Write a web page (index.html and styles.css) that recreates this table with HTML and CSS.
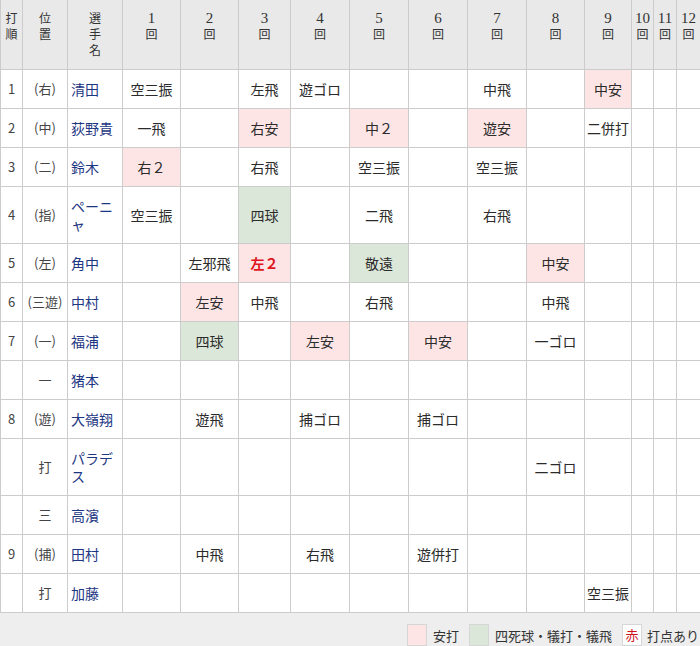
FILE: index.html
```html
<!DOCTYPE html>
<html lang="ja">
<head>
<meta charset="utf-8">
<title>打撃成績</title>
<link rel="stylesheet" href="styles.css">
</head>
<body>
<table class="score">
<colgroup>
<col class="c-order"><col class="c-pos"><col class="c-name">
<col class="c-i58"><col class="c-i58"><col class="c-i52"><col class="c-i59"><col class="c-i59"><col class="c-i59"><col class="c-i59"><col class="c-i58"><col class="c-i47"><col class="c-i22"><col class="c-i23"><col class="c-i24">
</colgroup>
<thead>
<tr>
<th><span class="ln">打</span><span class="ln">順</span></th>
<th><span class="ln">位</span><span class="ln">置</span></th>
<th><span class="ln">選</span><span class="ln">手</span><span class="ln">名</span></th>
<th><span class="ln num">1</span><span class="ln">回</span></th>
<th><span class="ln num">2</span><span class="ln">回</span></th>
<th><span class="ln num">3</span><span class="ln">回</span></th>
<th><span class="ln num">4</span><span class="ln">回</span></th>
<th><span class="ln num">5</span><span class="ln">回</span></th>
<th><span class="ln num">6</span><span class="ln">回</span></th>
<th><span class="ln num">7</span><span class="ln">回</span></th>
<th><span class="ln num">8</span><span class="ln">回</span></th>
<th><span class="ln num">9</span><span class="ln">回</span></th>
<th><span class="ln num">10</span><span class="ln">回</span></th>
<th><span class="ln num">11</span><span class="ln">回</span></th>
<th><span class="ln num">12</span><span class="ln">回</span></th>
</tr>
</thead>
<tbody>
<tr><td>1</td><td>(右)</td><td class="name">清田</td><td>空三振</td><td></td><td>左飛</td><td>遊ゴロ</td><td></td><td></td><td>中飛</td><td></td><td class="hit">中安</td><td></td><td></td><td></td></tr>
<tr><td>2</td><td>(中)</td><td class="name">荻野貴</td><td>一飛</td><td></td><td class="hit">右安</td><td></td><td class="hit">中２</td><td></td><td class="hit">遊安</td><td></td><td>二併打</td><td></td><td></td><td></td></tr>
<tr><td>3</td><td>(二)</td><td class="name">鈴木</td><td class="hit">右２</td><td></td><td>右飛</td><td></td><td>空三振</td><td></td><td>空三振</td><td></td><td></td><td></td><td></td><td></td></tr>
<tr><td>4</td><td>(指)</td><td class="name">ペーニャ</td><td>空三振</td><td></td><td class="walk">四球</td><td></td><td>二飛</td><td></td><td>右飛</td><td></td><td></td><td></td><td></td><td></td></tr>
<tr><td>5</td><td>(左)</td><td class="name">角中</td><td></td><td>左邪飛</td><td class="hit"><span class="rbi">左２</span></td><td></td><td class="walk">敬遠</td><td></td><td></td><td class="hit">中安</td><td></td><td></td><td></td><td></td></tr>
<tr><td>6</td><td>(三遊)</td><td class="name">中村</td><td></td><td class="hit">左安</td><td>中飛</td><td></td><td>右飛</td><td></td><td></td><td>中飛</td><td></td><td></td><td></td><td></td></tr>
<tr><td>7</td><td>(一)</td><td class="name">福浦</td><td></td><td class="walk">四球</td><td></td><td class="hit">左安</td><td></td><td class="hit">中安</td><td></td><td>一ゴロ</td><td></td><td></td><td></td><td></td></tr>
<tr><td></td><td>一</td><td class="name">猪本</td><td></td><td></td><td></td><td></td><td></td><td></td><td></td><td></td><td></td><td></td><td></td><td></td></tr>
<tr><td>8</td><td>(遊)</td><td class="name">大嶺翔</td><td></td><td>遊飛</td><td></td><td>捕ゴロ</td><td></td><td>捕ゴロ</td><td></td><td></td><td></td><td></td><td></td><td></td></tr>
<tr><td></td><td>打</td><td class="name">パラデス</td><td></td><td></td><td></td><td></td><td></td><td></td><td></td><td>二ゴロ</td><td></td><td></td><td></td><td></td></tr>
<tr><td></td><td>三</td><td class="name">高濱</td><td></td><td></td><td></td><td></td><td></td><td></td><td></td><td></td><td></td><td></td><td></td><td></td></tr>
<tr><td>9</td><td>(捕)</td><td class="name">田村</td><td></td><td>中飛</td><td></td><td>右飛</td><td></td><td>遊併打</td><td></td><td></td><td></td><td></td><td></td><td></td></tr>
<tr><td></td><td>打</td><td class="name">加藤</td><td></td><td></td><td></td><td></td><td></td><td></td><td></td><td></td><td>空三振</td><td></td><td></td><td></td></tr>
</tbody>
</table>
<div class="legend">
  <span class="sw sw-hit"></span><span class="lbl">安打</span>
  <span class="sw sw-walk"></span><span class="lbl">四死球・犠打・犠飛</span>
  <span class="sw sw-rbi">赤</span><span class="lbl">打点あり</span>
</div>
</body>
</html>
```

FILE: styles.css
```css
html, body {
  margin: 0;
  padding: 0;
  background: #eeeeee;
}
body {
  font-family: "Noto Sans CJK JP", "Noto Sans", sans-serif;
  color: #2b2b2b;
  font-size: 14px;
}
.score {
  border-collapse: collapse;
  table-layout: fixed;
  width: 700px;
  background: #ffffff;
}
.c-order { width: 22px; }
.c-pos { width: 45px; }
.c-name { width: 55px; }
.c-i58 { width: 58px; }
.c-i52 { width: 52px; }
.c-i59 { width: 59px; }
.c-i47 { width: 47px; }
.c-i22 { width: 22px; }
.c-i23 { width: 23px; }
.c-i24 { width: 24px; }

.score th {
  background: #e9e9e9;
  font-weight: normal;
  font-size: 12px;
  padding: 10px 0 11px;
  vertical-align: top;
  border: 1px solid #cccccc;
  border-top: 0;
  color: #333333;
  text-align: center;
}
.score th .ln {
  display: block;
  height: 16px;
  line-height: 16px;
}
.score th .num {
  font-family: "Liberation Serif", "DejaVu Serif", serif;
  font-size: 15px;
}
.score td {
  border: 1px solid #cccccc;
  padding: 10px 2px;
  line-height: 18px;
  text-align: center;
  vertical-align: middle;
}
.score td:first-child,
.score td:nth-child(2) {
  padding: 10px 0;
  font-size: 13px;
  color: #444444;
}
.score td.name {
  text-align: left;
  color: #1d3783;
  padding: 10px 3px;
  word-break: break-all;
}
.score td.hit { background: #fde5e5; }
.score td.walk { background: #dbe7d9; }
.rbi {
  color: #e0141e;
  font-weight: bold;
}
.legend {
  display: flex;
  justify-content: flex-end;
  align-items: center;
  padding: 10px 0 0;
  height: 24px;
  font-size: 13px;
  color: #333333;
}
.sw {
  display: inline-block;
  box-sizing: border-box;
  width: 20px;
  height: 22px;
  border: 1px solid #d6d6d6;
  margin-right: 6px;
  text-align: center;
  line-height: 20px;
  font-size: 13px;
}
.sw-hit { background: #fde5e5; }
.sw-walk { background: #dbe7d9; }
.sw-rbi { background: #ffffff; color: #d0101b; margin-right: 5px; }
.lbl { margin-right: 10px; }
.lbl:last-child { margin-right: 1px; }
```
